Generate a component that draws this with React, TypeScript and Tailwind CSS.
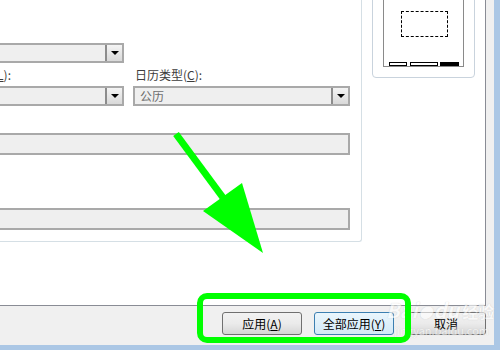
import * as React from "react";

function Combo({ className, text, disabled }: { className: string; text?: string; disabled?: boolean }) {
  return (
    <div
      className={`flex h-[20px] items-stretch border-2 border-[#a9a9a9] bg-[#efefef] ${className}`}
    >
      <div className={`flex-1 pl-[5px] leading-[16px] ${disabled ? "text-[#6d6d6d]" : "text-black"}`}>
        {text}
      </div>
      <div className="flex w-[17px] items-center justify-center border-l-2 border-[#8c8c8c] bg-gradient-to-b from-[#f4f4f4] to-[#d9d9d9]">
        <div className="h-0 w-0 border-x-[4px] border-t-[4px] border-x-transparent border-t-black" />
      </div>
    </div>
  );
}

function Btn({ children, primary }: { children: React.ReactNode; primary?: boolean }) {
  return (
    <div
      className={`flex h-[23px] w-[80px] items-center justify-center rounded-[3px] border ${
        primary
          ? "border-[#3c7fb1] bg-gradient-to-b from-[#eaf6fd] to-[#d3e9f7]"
          : "border-[#707070] bg-gradient-to-b from-[#f2f2f2] via-[#ebebeb] to-[#d6d6d6]"
      } text-black`}
    >
      {children}
    </div>
  );
}

export default function App() {
  return (
    <div className="relative flex h-[350px] w-[500px] overflow-hidden bg-[#abc7e5] font-['Noto_Sans_CJK_SC',sans-serif] text-[12px] text-[#1e1e1e]">
      <div className="flex h-[345px] w-[494px] flex-col bg-[#f0f0f0]">
        <div className="flex h-[306px] w-[486px] border-b border-r border-[#898c95] bg-white">
          {/* settings group */}
          <div className="flex h-[242px] w-[362px] flex-col rounded-br-[3px] border-b border-r border-[#d5dfe5] pt-[43px]">
            <Combo className="-ml-[21px] w-[145px]" />
            <div className="mt-[5px] flex">
              <div className="flex w-[124px] flex-col">
                <div className="flex h-[14px] w-[11px] justify-end whitespace-nowrap leading-[14px] text-[#3c3c3c]">
                  语言(<span className="underline">L</span>):
                </div>
                <Combo className="-ml-[21px] mt-[4px] w-[145px]" />
              </div>
              <div className="ml-[9px] flex flex-col">
                <div className="h-[14px] pl-[2px] leading-[14px] text-[#3c3c3c]">
                  日历类型(<span className="underline">C</span>):
                </div>
                <Combo className="mt-[4px] w-[217px]" text="公历" disabled />
              </div>
            </div>
            <div className="-ml-[21px] mt-[27px] h-[22px] w-[371px] border-2 border-[#a9a9a9] bg-[#efefef]" />
            <div className="-ml-[21px] mt-[53px] h-[22px] w-[371px] border-2 border-[#a9a9a9] bg-[#efefef]" />
          </div>

          {/* preview */}
          <div className="flex-1">
            <div className="-mt-[23px] ml-[10px] flex h-[101px] w-[103px] flex-col justify-end rounded-[4px] border border-[#c9d3dd] pb-[10px]">
              <div className="relative ml-[10px] h-[89px] w-[81px] border border-[#8a8a8a] bg-white">
                <div className="absolute left-[17px] top-[32px] h-[26px] w-[47px] border border-dashed border-black" />
                <div className="absolute bottom-0 left-[5px] h-[4px] w-[18px] border border-black bg-white" />
                <div className="absolute bottom-0 left-[26px] h-[4px] w-[28px] border border-black bg-white" />
                <div className="absolute bottom-0 left-[56px] h-[4px] w-[19px] bg-black" />
              </div>
            </div>
          </div>
        </div>

        <div className="flex gap-[12px] pl-[222px] pt-[6px]">
          <Btn>
            应用(<span className="underline">A</span>)
          </Btn>
          <Btn primary>
            全部应用(<span className="underline">Y</span>)
          </Btn>
          <Btn>取消</Btn>
        </div>
      </div>

      {/* watermark */}
      <div className="pointer-events-none absolute left-[386px] top-[298px] flex flex-col items-start text-white opacity-60 [text-shadow:0_0_1px_#b0b0b0]">
        <div className="flex items-baseline gap-[1px] text-[20px] font-bold italic leading-[24px]">
          <span>Bai</span>
          <span className="text-[14px]">●</span>
          <span>du</span>
          <span className="ml-[2px] not-italic text-[16px]">经验</span>
        </div>
        <div className="-mt-[1px] pl-[8px] text-[11px] leading-[14px]">jingyan.baidu.com</div>
      </div>

      {/* annotation */}
      <div className="pointer-events-none absolute left-[197px] top-[293px] h-[50px] w-[214px] rounded-[10px] border-[6px] border-[#00ff00]" />
      <svg className="pointer-events-none absolute left-0 top-0" width="500" height="350">
        <line x1="176" y1="134" x2="224" y2="199" stroke="#00ff00" strokeWidth="7" />
        <polygon points="203,211 242,183 263,253" fill="#00ff00" />
      </svg>
    </div>
  );
}
